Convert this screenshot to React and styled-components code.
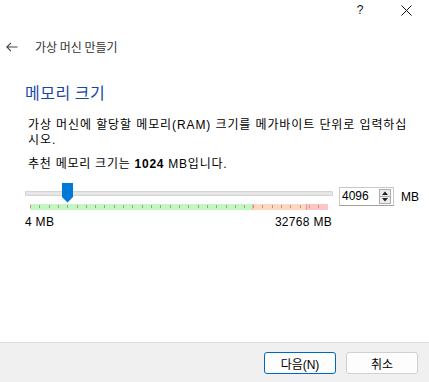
import React from "react";
import styled, { createGlobalStyle } from "styled-components";

const Global = createGlobalStyle`
  html, body { margin: 0; padding: 0; background: #ffffff; }
  body { font-family: "Liberation Sans", "Noto Sans CJK KR", sans-serif; }
`;

const Window = styled.div`
  width: 429px;
  height: 382px;
  background: #ffffff;
  display: flex;
  flex-direction: column;
  overflow: hidden;
  color: #000;
  font-size: 12px;
`;

const TitleBar = styled.div`
  height: 20px;
  display: flex;
  justify-content: flex-end;
  align-items: center;
`;

const TitleButton = styled.div`
  width: 46px;
  height: 20px;
  display: flex;
  align-items: center;
  justify-content: center;
  font-size: 12px;
  color: #111;
`;

const Header = styled.div`
  margin-top: 19px;
  height: 16px;
  display: flex;
  align-items: center;
  padding-left: 6px;
  gap: 17px;
`;

const HeaderTitle = styled.span`
  font-family: "Noto Sans CJK KR", sans-serif;
  font-size: 12px;
  line-height: 16px;
  color: #333;
`;

const Content = styled.div`
  padding-left: 25px;
  display: flex;
  flex-direction: column;
`;

const SectionTitle = styled.h1`
  margin: 27px 0 0;
  font-family: "Noto Sans CJK KR", sans-serif;
  font-weight: normal;
  font-size: 16px;
  letter-spacing: 0.5px;
  line-height: 20px;
  color: #1846a6;
`;

const Paragraph = styled.p`
  margin: ${(p) => p.$top}px 0 0 3px;
  font-family: "Liberation Sans", "Noto Sans CJK KR", sans-serif;
  font-size: 12px;
  letter-spacing: ${(p) => p.$ls}px;
  line-height: 15px;
  color: #000;
`;

const SliderRow = styled.div`
  margin-top: 11px;
  display: flex;
  align-items: flex-start;
`;

const SliderColumn = styled.div`
  width: 308px;
  display: flex;
  flex-direction: column;
`;

const TrackArea = styled.div`
  position: relative;
  height: 20px;
  display: flex;
  align-items: center;
`;

const Track = styled.div`
  flex: 1;
  height: 3px;
  background: #e6e6e6;
  border: 1px solid #d4d4d4;
  border-radius: 1px;
`;

const Handle = styled.svg`
  position: absolute;
  top: 0;
  width: 11px;
  height: 20px;
`;

const TickBar = styled.div`
  margin: 1px 5px 0;
  height: 6px;
  display: flex;
`;

const Zone = styled.div`
  flex: 0 0 ${(p) => p.$w}px;
  height: 6px;
  background-color: ${(p) => p.$bg};
  border-left: ${(p) => (p.$edge ? `1px solid ${p.$edge}` : "none")};
  box-sizing: border-box;
  background-image: repeating-linear-gradient(
    to right,
    ${(p) => p.$tick} 0 1px,
    transparent 1px 9.31px
  );
  background-position: ${(p) => p.$offset}px 1px;
  background-size: 100% 3px;
  background-repeat: no-repeat;
`;

const Labels = styled.div`
  margin-top: 5px;
  display: flex;
  justify-content: space-between;
  padding-right: 1px;
  font-size: 12px;
  letter-spacing: 0.3px;
  line-height: 14px;
`;

const SpinBox = styled.div`
  margin: 4px 0 0 6px;
  width: 55px;
  height: 19px;
  box-sizing: border-box;
  border: 1px solid #c8c8c8;
  border-bottom-color: #a0a0a0;
  display: flex;
  align-items: center;
  padding-left: 2px;
  background: #fff;
`;

const SpinText = styled.span`
  flex: 1;
  font-size: 12px;
  line-height: 15px;
`;

const SpinButtons = styled.div`
  width: 12px;
  height: 15px;
  margin-right: 2px;
  box-sizing: border-box;
  border: 1px solid #adadad;
  background: #ececec;
  display: flex;
  flex-direction: column;
`;

const SpinHalf = styled.div`
  flex: 1;
  display: flex;
  align-items: center;
  justify-content: center;
  border-top: ${(p) => (p.$lower ? "1px solid #adadad" : "none")};
`;

const Unit = styled.span`
  margin: 4px 0 0 7px;
  height: 19px;
  display: flex;
  align-items: center;
  font-size: 12px;
`;

const Footer = styled.div`
  margin-top: auto;
  height: 40px;
  box-sizing: border-box;
  border-top: 1px solid #dcdcdc;
  background: #f0f0f0;
  display: flex;
  justify-content: flex-end;
  align-items: flex-start;
  padding: 9px 11px 0 0;
  gap: 10px;
`;

const Button = styled.button`
  width: 72px;
  height: 22px;
  box-sizing: border-box;
  border-radius: 3px;
  border: 1px solid ${(p) => (p.$primary ? "#0067c0" : "#d0d0d0")};
  box-shadow: ${(p) => (p.$primary ? "inset 0 0 0 1px #ffffff" : "none")};
  background: #fdfdfd;
  font-family: "Liberation Sans", "Noto Sans CJK KR", sans-serif;
  font-size: 12px;
  color: #000;
  padding: 0;
  display: flex;
  align-items: center;
  justify-content: center;
`;

const MIN = 4;
const MAX = 32768;
const VALUE = 4096;

export default function App() {
  const handleLeft = 5 + ((VALUE - MIN) / (MAX - MIN)) * 298 - 5.5;
  return (
    <Window>
      <Global />
      <TitleBar>
        <TitleButton>?</TitleButton>
        <TitleButton>
          <svg width="11" height="11" viewBox="0 0 11 11">
            <path d="M0.5 0.5 L10.5 10.5 M10.5 0.5 L0.5 10.5" stroke="#111" strokeWidth="1" fill="none" />
          </svg>
        </TitleButton>
      </TitleBar>
      <Header>
        <svg width="12" height="10" viewBox="0 0 12 10">
          <path d="M0.8 5 H11.5 M5 0.8 L0.8 5 L5 9.2" stroke="#444" strokeWidth="1.1" fill="none" />
        </svg>
        <HeaderTitle>가상 머신 만들기</HeaderTitle>
      </Header>
      <Content>
        <SectionTitle>메모리 크기</SectionTitle>
        <Paragraph $top={16} $ls={0.9}>
          가상 머신에 할당할 메모리(RAM) 크기를 메가바이트 단위로 입력하십
          <br />
          시오.
        </Paragraph>
        <Paragraph $top={9} $ls={0.75}>
          추천 메모리 크기는 <b>1024</b> MB입니다.
        </Paragraph>
        <SliderRow>
          <SliderColumn>
            <TrackArea>
              <Track />
              <Handle viewBox="0 0 11 20" style={{ left: handleLeft }}>
                <path d="M0 0 H11 V14 L5.5 19.5 L0 14 Z" fill="#0078d7" />
              </Handle>
            </TrackArea>
            <TickBar>
              <Zone $w={222} $bg="#c2f7c2" $tick="#a89c8c" $offset={0} />
              <Zone $w={54} $bg="#ffd6c2" $tick="#b09a8a" $edge="#f0b890" $offset={0} />
              <Zone $w={22} $bg="#ffc4c4" $tick="#b09a9a" $edge="#f09090" $offset={2} />
            </TickBar>
            <Labels>
              <span>4 MB</span>
              <span>32768 MB</span>
            </Labels>
          </SliderColumn>
          <SpinBox>
            <SpinText>4096</SpinText>
            <SpinButtons>
              <SpinHalf>
                <svg width="6" height="4" viewBox="0 0 6 4">
                  <path d="M0 4 L3 0.5 L6 4 Z" fill="#222" />
                </svg>
              </SpinHalf>
              <SpinHalf $lower>
                <svg width="6" height="4" viewBox="0 0 6 4">
                  <path d="M0 0 L3 3.5 L6 0 Z" fill="#222" />
                </svg>
              </SpinHalf>
            </SpinButtons>
          </SpinBox>
          <Unit>MB</Unit>
        </SliderRow>
      </Content>
      <Footer>
        <Button $primary>다음(N)</Button>
        <Button>취소</Button>
      </Footer>
    </Window>
  );
}
